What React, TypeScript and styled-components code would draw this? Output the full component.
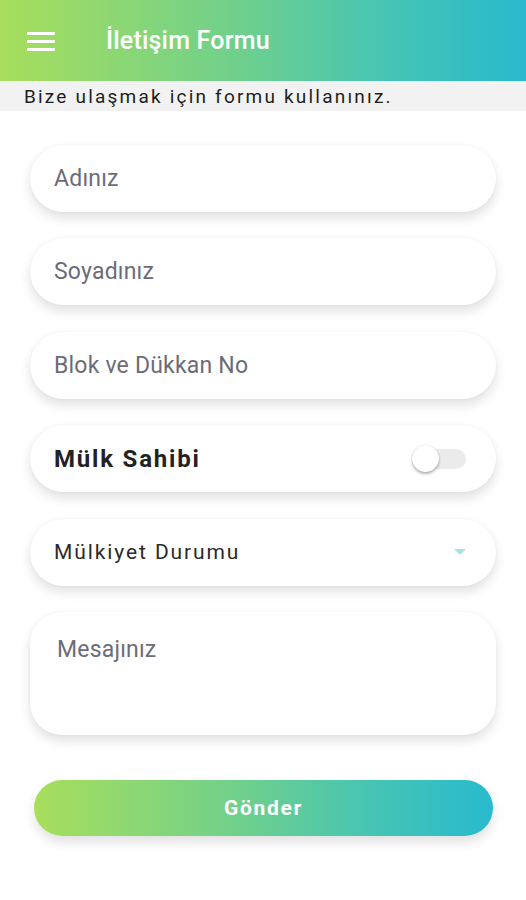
import React from "react";
import styled, { createGlobalStyle } from "styled-components";

const GlobalStyle = createGlobalStyle`
  html, body {
    margin: 0;
    padding: 0;
    background: #ffffff;
    font-family: Roboto, "Noto Sans", Arial, sans-serif;
  }
`;

const brandGradient = "linear-gradient(90deg, #a8de5c 0%, #6fd08c 45%, #44c4b6 75%, #28bacd 100%)";

const Page = styled.div`
  width: 526px;
  min-height: 900px;
  background: #ffffff;
`;

const Header = styled.header`
  height: 81px;
  display: flex;
  align-items: center;
  background: ${brandGradient};
  padding-left: 27px;
  box-sizing: border-box;
`;

const MenuButton = styled.div`
  width: 28px;
  height: 19px;
  display: flex;
  flex-direction: column;
  justify-content: space-between;
  margin-top: 1px;

  span {
    display: block;
    height: 3px;
    border-radius: 1px;
    background: #ffffff;
  }
`;

const Title = styled.h1`
  margin: 0 0 0 51px;
  font-size: 25px;
  font-weight: 500;
  color: #ffffff;
  letter-spacing: 0.2px;
`;

const Subtitle = styled.div`
  height: 30px;
  background: #f2f2f2;
  padding-left: 24px;
  display: flex;
  align-items: center;
  font-size: 19px;
  letter-spacing: 2.2px;
  color: #1e1e1e;
`;

const Form = styled.form`
  display: flex;
  flex-direction: column;
  gap: 26.4px;
  padding: 34px 30px 0;
`;

const Pill = styled.div<{ $tall?: boolean }>`
  height: ${({ $tall }) => ($tall ? 123 : 67)}px;
  border-radius: ${({ $tall }) => ($tall ? 32 : 34)}px;
  background: #ffffff;
  box-shadow: 0 6px 12px rgba(0, 0, 0, 0.12), 0 0 3px rgba(0, 0, 0, 0.04);
  display: flex;
  align-items: ${({ $tall }) => ($tall ? "flex-start" : "center")};
  justify-content: space-between;
  padding: ${({ $tall }) => ($tall ? "24px 30px 0 27px" : "0 30px 0 24px")};
  box-sizing: border-box;
`;

const Placeholder = styled.span`
  font-size: 23px;
  letter-spacing: 0.2px;
  color: #6c6c78;
`;

const BoldLabel = styled.span`
  font-size: 24px;
  font-weight: 700;
  letter-spacing: 1.8px;
  color: #222222;
`;

const SelectLabel = styled.span`
  font-size: 21px;
  letter-spacing: 1.9px;
  color: #2a2a2a;
`;

const Switch = styled.div`
  position: relative;
  width: 52px;
  height: 20px;

  &::before {
    content: "";
    position: absolute;
    left: 10px;
    right: 0;
    top: 0;
    bottom: 0;
    border-radius: 10px;
    background: #ebebeb;
  }
`;

const Thumb = styled.div`
  position: absolute;
  left: -2px;
  top: -4px;
  width: 27px;
  height: 27px;
  border-radius: 50%;
  background: #ffffff;
  box-shadow: 0 2px 3px rgba(0, 0, 0, 0.3), 0 0 1px rgba(0, 0, 0, 0.2);
`;

const Caret = styled.div`
  width: 0;
  height: 0;
  border-left: 6px solid transparent;
  border-right: 6px solid transparent;
  border-top: 6px solid #a4e4e6;
`;

const SubmitButton = styled.button`
  margin: 18.6px 3px 0 4px;
  height: 56px;
  border: none;
  border-radius: 28px;
  background: ${brandGradient};
  box-shadow: 0 6px 12px rgba(0, 0, 0, 0.12);
  color: #ffffff;
  font-family: Roboto, "Noto Sans", Arial, sans-serif;
  font-size: 21px;
  font-weight: 700;
  letter-spacing: 1.7px;
`;

const App: React.FC = () => (
  <Page>
    <GlobalStyle />
    <Header>
      <MenuButton>
        <span />
        <span />
        <span />
      </MenuButton>
      <Title>İletişim Formu</Title>
    </Header>
    <Subtitle>Bize ulaşmak için formu kullanınız.</Subtitle>
    <Form>
      <Pill>
        <Placeholder>Adınız</Placeholder>
      </Pill>
      <Pill>
        <Placeholder>Soyadınız</Placeholder>
      </Pill>
      <Pill>
        <Placeholder>Blok ve Dükkan No</Placeholder>
      </Pill>
      <Pill>
        <BoldLabel>Mülk Sahibi</BoldLabel>
        <Switch>
          <Thumb />
        </Switch>
      </Pill>
      <Pill>
        <SelectLabel>Mülkiyet Durumu</SelectLabel>
        <Caret />
      </Pill>
      <Pill $tall>
        <Placeholder>Mesajınız</Placeholder>
      </Pill>
      <SubmitButton type="button">Gönder</SubmitButton>
    </Form>
  </Page>
);

export default App;
